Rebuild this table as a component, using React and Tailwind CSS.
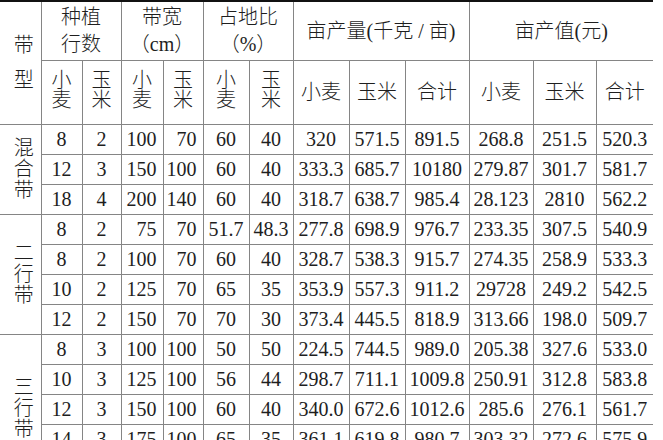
import React from 'react';

const groups = [
    {
        name: ['混', '合', '带'],
        pad: '',
        rows: [
            ['8', '2', '100', '70', '60', '40', '320', '571.5', '891.5', '268.8', '251.5', '520.3'],
            ['12', '3', '150', '100', '60', '40', '333.3', '685.7', '10180', '279.87', '301.7', '581.7'],
            ['18', '4', '200', '140', '60', '40', '318.7', '638.7', '985.4', '28.123', '2810', '562.2'],
        ],
    },
    {
        name: ['二', '行', '带'],
        pad: '',
        rows: [
            ['8', '2', '75', '70', '51.7', '48.3', '277.8', '698.9', '976.7', '233.35', '307.5', '540.9'],
            ['8', '2', '100', '70', '60', '40', '328.7', '538.3', '915.7', '274.35', '258.9', '533.3'],
            ['10', '2', '125', '70', '65', '35', '353.9', '557.3', '911.2', '29728', '249.2', '542.5'],
            ['12', '2', '150', '70', '70', '30', '373.4', '445.5', '818.9', '313.66', '198.0', '509.7'],
        ],
    },
    {
        name: ['三', '行', '带'],
        pad: 'pt-[28px]',
        rows: [
            ['8', '3', '100', '100', '50', '50', '224.5', '744.5', '989.0', '205.38', '327.6', '533.0'],
            ['10', '3', '125', '100', '56', '44', '298.7', '711.1', '1009.8', '250.91', '312.8', '583.8'],
            ['12', '3', '150', '100', '60', '40', '340.0', '672.6', '1012.6', '285.6', '276.1', '561.7'],
            ['14', '3', '175', '100', '65', '35', '361.1', '619.8', '980.7', '303.32', '272.6', '575.9'],
        ],
    },
];

const cell = 'border border-[#858585] p-0 text-center align-middle whitespace-nowrap';

function Stack({ chars, lead }) {
    return (
        <div className={'flex flex-col items-center ' + lead}>
            {chars.map((c, i) => (
                <span key={i}>{c}</span>
            ))}
        </div>
    );
}

export default function App() {
    return (
        <div className="bg-white w-[663px] h-[440px] overflow-hidden text-[20px] leading-[22px] text-[#1e1e1e] font-['Liberation_Serif','Noto_Sans_CJK_SC',serif]">
            <div className="w-[653px] border-t-2 border-[#111]">
                <table className="table-fixed border-collapse w-[653px]">
                    <colgroup>
                        <col className="w-[7px]" />
                        <col className="w-[34px]" />
                        <col className="w-[41px]" />
                        <col className="w-[39px]" />
                        <col className="w-[42px]" />
                        <col className="w-[40px]" />
                        <col className="w-[46px]" />
                        <col className="w-[44px]" />
                        <col className="w-[56px]" />
                        <col className="w-[56px]" />
                        <col className="w-[64px]" />
                        <col className="w-[64px]" />
                        <col className="w-[63px]" />
                        <col className="w-[57px]" />
                    </colgroup>
                    <thead>
                        {/* header row 1 */}
                        <tr className="h-[58px]">
                            <th rowSpan={2} className="p-0 border-b border-[#858585]"></th>
                            <th rowSpan={2} className={cell + ' border-t-0 border-l-0 font-light'}>
                                <Stack chars={['带', '型']} lead="leading-[35px]" />
                            </th>
                            <th colSpan={2} className={cell + ' border-t-0 font-light leading-[27px]'}>
                                种植<br />行数
                            </th>
                            <th colSpan={2} className={cell + ' border-t-0 font-light leading-[27px]'}>
                                带宽<br />（cm）
                            </th>
                            <th colSpan={2} className={cell + ' border-t-0 font-light leading-[27px]'}>
                                占地比<br />（%）
                            </th>
                            <th colSpan={3} className={cell + ' border-t-0 font-light'}>
                                亩产量(千克 / 亩)
                            </th>
                            <th colSpan={3} className={cell + ' border-t-0 border-r-0 font-light'}>
                                亩产值(元)
                            </th>
                        </tr>
                        {/* header row 2 */}
                        <tr className="h-[64px]">
                            {[0, 1, 2, 3, 4, 5].map((i) => (
                                <th key={i} className={cell + ' font-light pb-1'}>
                                    <Stack chars={i % 2 === 0 ? ['小', '麦'] : ['玉', '米']} lead="leading-[20px]" />
                                </th>
                            ))}
                            <th className={cell + ' font-light'}>小麦</th>
                            <th className={cell + ' font-light'}>玉米</th>
                            <th className={cell + ' font-light'}>合计</th>
                            <th className={cell + ' font-light'}>小麦</th>
                            <th className={cell + ' font-light'}>玉米</th>
                            <th className={cell + ' border-r-0 font-light'}>合计</th>
                        </tr>
                    </thead>
                    <tbody>
                        {groups.map((g) =>
                            g.rows.map((r, ri) => (
                                <tr key={g.name.join('') + ri} className="h-[30px]">
                                    {ri === 0 && (
                                        <>
                                            <td rowSpan={g.rows.length} className="p-0 border-t border-[#858585]"></td>
                                            <td rowSpan={g.rows.length} className={cell + ' border-l-0 font-light ' + g.pad}>
                                                <Stack chars={g.name} lead="leading-[21px]" />
                                            </td>
                                        </>
                                    )}
                                    {r.map((v, ci) => (
                                        <td
                                            key={ci}
                                            className={
                                                cell +
                                                ' leading-[20px]' +
                                                (ci === 2 || ci === 3 ? ' text-right pr-[6px]' : '') +
                                                (ci === 11 ? ' border-r-0' : '')
                                            }
                                        >
                                            {v}
                                        </td>
                                    ))}
                                </tr>
                            ))
                        )}
                    </tbody>
                </table>
            </div>
        </div>
    );
}
